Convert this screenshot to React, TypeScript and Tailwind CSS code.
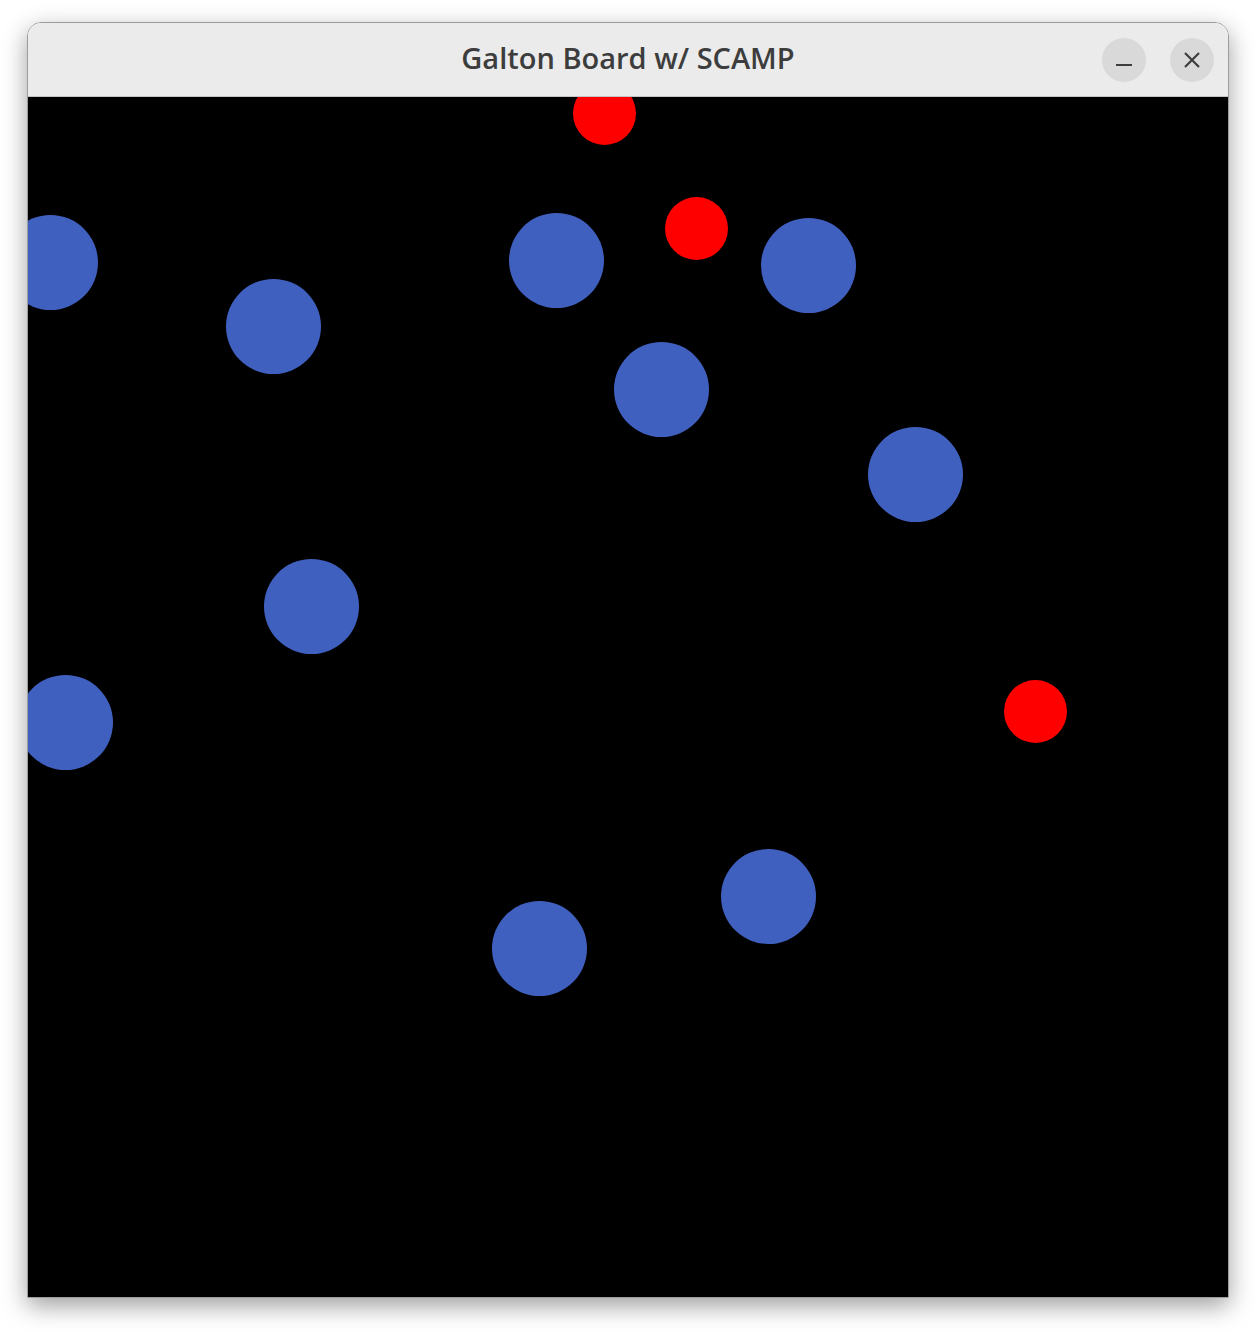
// Galton board window: title bar + black canvas with pegs and balls

const pegs = [
  "left-[-25px] top-[118px]",
  "left-[481px] top-[116px]",
  "left-[733px] top-[121px]",
  "left-[198px] top-[182px]",
  "left-[586px] top-[245px]",
  "left-[840px] top-[330px]",
  "left-[236px] top-[462px]",
  "left-[-10px] top-[578px]",
  "left-[693px] top-[752px]",
  "left-[464px] top-[804px]",
];

const balls = [
  "left-[545px] top-[-15px]",
  "left-[637px] top-[100px]",
  "left-[976px] top-[583px]",
];

const App = () => {
  return (
    <div className="min-h-[1332px] bg-white pl-[27px] pt-[22px]">
      <div className="w-[1202px] rounded-t-[14px] border border-[#9c9c9c] shadow-[0_8px_24px_rgba(0,0,0,0.38)]">
        {/* title bar */}
        <div className="relative flex h-[74px] items-center justify-center rounded-t-[13px] border-b border-[#c4c4c4] bg-[#ebebeb]">
          <span
            className="mb-[3px] text-[29px] font-semibold text-[#3d3d3d]"
            style={{ fontFamily: '"Open Sans", "Noto Sans", sans-serif' }}
          >
            Galton Board w/ SCAMP
          </span>
          <div className="absolute right-[14px] top-[15px] flex gap-[24px]">
            <div className="flex h-[44px] w-[44px] items-center justify-center rounded-full bg-[#d9d9d9]">
              <div className="mt-[9px] h-[2px] w-[16px] bg-[#3d3d3d]" />
            </div>
            <div className="flex h-[44px] w-[44px] items-center justify-center rounded-full bg-[#d9d9d9]">
              <svg width="16" height="16" viewBox="0 0 16 16">
                <path d="M1 1 L15 15 M15 1 L1 15" stroke="#3d3d3d" strokeWidth="2.2" />
              </svg>
            </div>
          </div>
        </div>
        {/* canvas */}
        <div className="relative h-[1200px] w-[1200px] overflow-hidden bg-black">
          {pegs.map((p, i) => (
            <div key={i} className={`absolute h-[95px] w-[95px] rounded-full bg-[#4060c0] ${p}`} />
          ))}
          {balls.map((b, i) => (
            <div key={i} className={`absolute h-[63px] w-[63px] rounded-full bg-[#ff0000] ${b}`} />
          ))}
        </div>
      </div>
    </div>
  );
};

export default App;
